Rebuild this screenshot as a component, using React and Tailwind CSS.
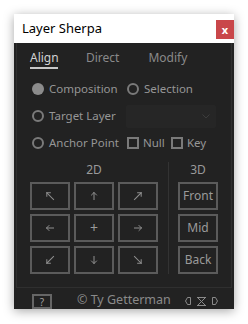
import React from "react";

const font = { fontFamily: '"Noto Sans", "Open Sans", "DejaVu Sans", sans-serif' };

function Arrow({ dir }) {
  const rot = { n: 0, ne: 45, e: 90, se: 135, s: 180, sw: 225, w: 270, nw: 315 }[dir];
  const diag = dir.length === 2;
  return (
    <svg width="12" height="12" viewBox="0 0 12 12" style={{ transform: `rotate(${rot}deg)` }}>
      <g stroke="#8f8f8f" strokeWidth="1" fill="none" strokeLinecap="square">
        <line x1="6" y1={diag ? 1.5 : 2.5} x2="6" y2={diag ? 11 : 9.5} />
        <polyline points={diag ? "3.5,4 6,1.5 8.5,4" : "3.5,5 6,2.5 8.5,5"} />
      </g>
    </svg>
  );
}

function Btn({ children }) {
  return (
    <div className="w-[40px] h-[28px] border-2 border-[#5b5b5b] flex items-center justify-center text-[12px] text-[#9a9a9a] leading-none">
      {children}
    </div>
  );
}

function Radio({ filled, label }) {
  return (
    <div className="flex items-center gap-[5px] whitespace-nowrap">
      {filled ? (
        <div className="w-[12px] h-[12px] rounded-full bg-[#8c8c8c] shrink-0" />
      ) : (
        <div className="w-[12px] h-[12px] rounded-full border-2 border-[#7a7a7a] shrink-0" />
      )}
      <span className="text-[11.5px] text-[#969696] leading-none">{label}</span>
    </div>
  );
}

function Check({ label }) {
  return (
    <div className="flex items-center gap-[4px] whitespace-nowrap">
      <div className="w-[12px] h-[12px] border-2 border-[#7a7a7a] shrink-0" />
      <span className="text-[11.5px] text-[#969696] leading-none">{label}</span>
    </div>
  );
}

export default function App() {
  return (
    <div className="w-[248px] h-[324px] bg-white pl-[14px] pt-[14px]" style={font}>
      <div className="w-[220px] h-[295px] flex flex-col shadow-[0_2px_10px_rgba(0,0,0,0.35)]">
        {/* title bar */}
        <div className="h-[29px] bg-white flex items-start justify-between shrink-0">
          <span className="pl-[8px] pt-[5px] text-[13px] leading-[18px] text-black">Layer Sherpa</span>
          <div className="mt-[6px] w-[18px] h-[19px] bg-[#c9474a] flex items-center justify-center text-white text-[11px] font-bold leading-none">
            x
          </div>
        </div>
        {/* body */}
        <div className="flex-1 bg-[#222222] flex flex-col">
          <div className="mx-[2px] border-x border-b border-[#2f2f2f] h-[245px] flex flex-col">
            {/* tabs */}
            <div className="flex pl-[13px] pt-[7px] gap-[28px] text-[12px] leading-[16px] whitespace-nowrap">
              <div className="flex flex-col">
                <span className="text-[#d2d2d2] w-[28px]">Align</span>
                <div className="mt-[1px] h-[2px] bg-[#c8c8c8] w-[28px]" />
              </div>
              <span className="text-[#8a8a8a]">Direct</span>
              <span className="text-[#8a8a8a] ml-[1px]">Modify</span>
            </div>
            {/* options */}
            <div className="mt-[8px] pl-[15px] flex flex-col gap-[3px]">
              <div className="h-[24px] flex items-center">
                <div className="w-[95px]"><Radio filled label="Composition" /></div>
                <Radio label="Selection" />
              </div>
              <div className="h-[24px] flex items-center">
                <div className="w-[94px]"><Radio label="Target Layer" /></div>
                <div className="w-[90px] h-[23px] bg-[#262626] rounded-[2px] flex items-center justify-end pr-[6px]">
                  <svg width="8" height="5" viewBox="0 0 8 5">
                    <polyline points="0.5,0.5 4,4 7.5,0.5" stroke="#3c3c3c" strokeWidth="1" fill="none" />
                  </svg>
                </div>
              </div>
              <div className="h-[24px] flex items-center">
                <div className="w-[95px]"><Radio label="Anchor Point" /></div>
                <div className="w-[44px]"><Check label="Null" /></div>
                <Check label="Key" />
              </div>
            </div>
            {/* grid */}
            <div className="mt-[7px] pl-[13px] flex">
              <div className="flex flex-col">
                <div className="h-[16px] text-center text-[12px] leading-[16px] text-[#9a9a9a]">2D</div>
                <div className="mt-[4px] grid grid-cols-3 gap-[4px] w-[128px]">
                  <Btn><Arrow dir="nw" /></Btn>
                  <Btn><Arrow dir="n" /></Btn>
                  <Btn><Arrow dir="ne" /></Btn>
                  <Btn><Arrow dir="w" /></Btn>
                  <Btn><span className="text-[14px] text-[#9a9a9a]">+</span></Btn>
                  <Btn><Arrow dir="e" /></Btn>
                  <Btn><Arrow dir="sw" /></Btn>
                  <Btn><Arrow dir="s" /></Btn>
                  <Btn><Arrow dir="se" /></Btn>
                </div>
              </div>
              <div className="ml-[10px] w-[1px] h-[112px] bg-[#333333]" />
              <div className="ml-[9px] flex flex-col">
                <div className="h-[16px] text-center text-[12px] leading-[16px] text-[#9a9a9a]">3D</div>
                <div className="mt-[4px] flex flex-col gap-[4px]">
                  <Btn>Front</Btn>
                  <Btn>Mid</Btn>
                  <Btn>Back</Btn>
                </div>
              </div>
            </div>
          </div>
          {/* footer */}
          <div className="flex-1 flex items-end whitespace-nowrap">
            <div className="ml-[18px] w-[20px] h-[15px] border-2 border-[#666666] flex items-center justify-center text-[10px] leading-none text-[#a0a0a0] shrink-0">
              ?
            </div>
            <div className="self-center ml-[25px] w-[84px] text-[12.5px] leading-none text-[#8a8a8a] mt-[4px] shrink-0">© Ty Getterman</div>
            <div className="self-center mt-[5px] ml-[24px] flex items-center gap-[6px] shrink-0">
              <svg width="6" height="8" viewBox="0 0 6 8">
                <polygon points="0.5,4 2.5,0.5 5.5,0.5 5.5,7.5 2.5,7.5" stroke="#8a8a8a" strokeWidth="1" fill="none" />
              </svg>
              <svg width="9" height="9" viewBox="0 0 9 9">
                <g stroke="#8a8a8a" strokeWidth="1" fill="none">
                  <line x1="0" y1="0.5" x2="9" y2="0.5" />
                  <line x1="0" y1="8.5" x2="9" y2="8.5" />
                  <line x1="1" y1="1" x2="8" y2="8" />
                  <line x1="8" y1="1" x2="1" y2="8" />
                </g>
              </svg>
              <svg width="6" height="8" viewBox="0 0 6 8">
                <polygon points="5.5,4 3.5,0.5 0.5,0.5 0.5,7.5 3.5,7.5" stroke="#8a8a8a" strokeWidth="1" fill="none" />
              </svg>
            </div>
          </div>
        </div>
      </div>
    </div>
  );
}
